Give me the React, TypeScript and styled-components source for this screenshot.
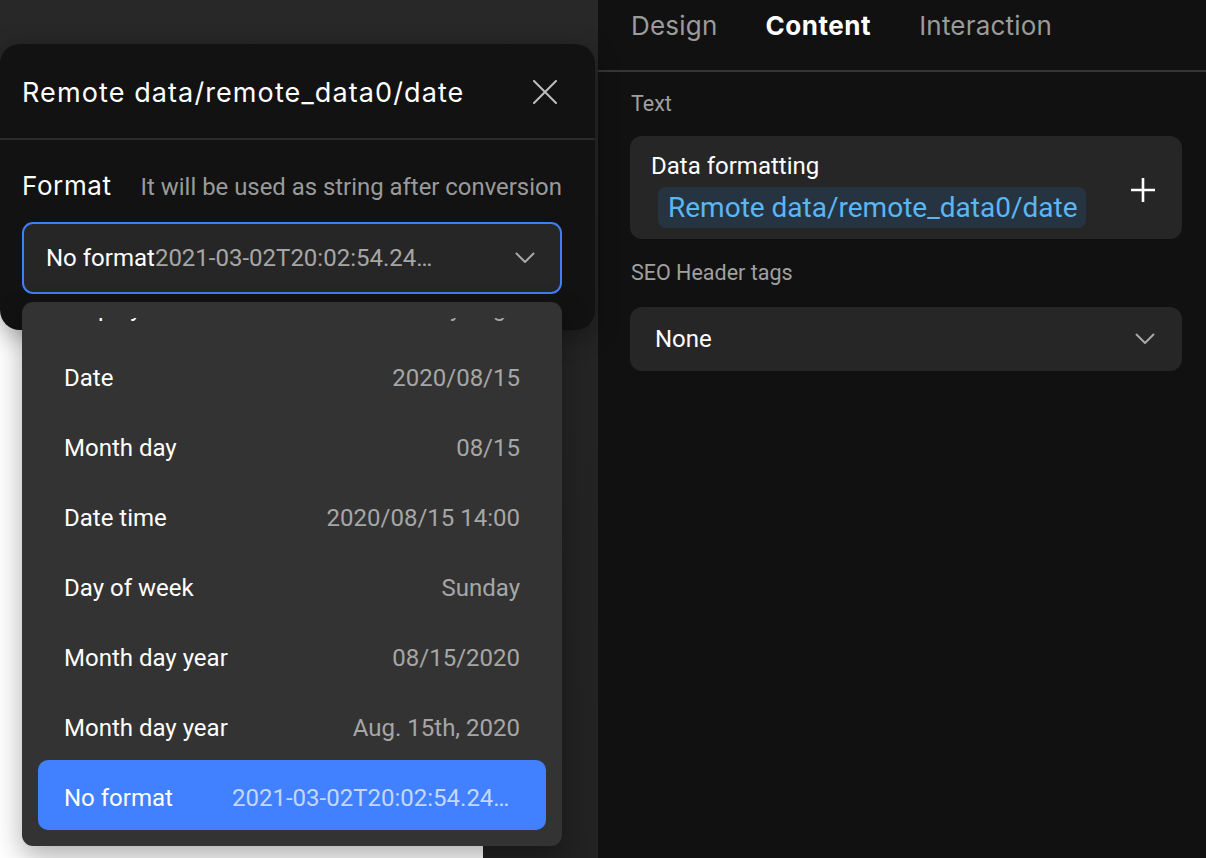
import * as React from "react";
import styled, { createGlobalStyle } from "styled-components";

interface FormatOption {
  label: string;
  sample: string;
}

const formats: FormatOption[] = [
  { label: "Display time", sample: "3 days ago" },
  { label: "Date", sample: "2020/08/15" },
  { label: "Month day", sample: "08/15" },
  { label: "Date time", sample: "2020/08/15 14:00" },
  { label: "Day of week", sample: "Sunday" },
  { label: "Month day year", sample: "08/15/2020" },
  { label: "Month day year", sample: "Aug. 15th, 2020" },
  { label: "No format", sample: "2021-03-02T20:02:54.240Z" },
];

const selected = formats.length - 1;

const GlobalStyle = createGlobalStyle`
  html, body {
    margin: 0;
    padding: 0;
    background: #111111;
  }
  body {
    font-family: Roboto, "Noto Sans", sans-serif;
    color: #ffffff;
    -webkit-font-smoothing: antialiased;
  }
  * {
    box-sizing: border-box;
  }
`;

const Screen = styled.div`
  display: grid;
  grid-template-columns: 598px 1fr;
  width: 100%;
  height: 100vh;
  overflow: hidden;
`;

/* ---------- left: canvas with the floating editor ---------- */

const Canvas = styled.div`
  position: relative;
  background: linear-gradient(180deg, #282828 0%, #242424 40%, #222222 100%);
`;

const Artboard = styled.div`
  position: absolute;
  left: 0;
  top: 300px;
  bottom: 0;
  width: 483px;
  background: #ffffff;
`;

const Modal = styled.div`
  position: absolute;
  top: 44px;
  left: 0;
  width: 595px;
  background: #121212;
  border-radius: 20px;
  box-shadow: 0 6px 24px rgba(0, 0, 0, 0.35);
  z-index: 2;
`;

const ModalHeader = styled.div`
  display: flex;
  align-items: center;
  justify-content: space-between;
  height: 96px;
  padding: 2px 38px 0 22px;
  border-bottom: 2px solid #2b2b2b;
`;

const ModalTitle = styled.h2`
  margin: 0;
  font-family: Inter, Roboto, sans-serif;
  font-size: 27px;
  font-weight: 400;
  letter-spacing: 1.1px;
  color: #ffffff;
`;

const IconButton = styled.button`
  display: flex;
  align-items: center;
  justify-content: center;
  padding: 0;
  border: 0;
  background: transparent;
  color: #bdbdbd;
  cursor: pointer;
`;

const ModalBody = styled.div`
  padding: 30px 33px 36px 22px;
`;

const FieldRow = styled.div`
  display: flex;
  align-items: baseline;
  gap: 29px;
  height: 32px;
  line-height: 32px;
  margin-bottom: 20px;
`;

const FieldLabel = styled.span`
  font-family: Inter, Roboto, sans-serif;
  font-size: 26px;
  letter-spacing: 0.6px;
  color: #ffffff;
`;

const FieldHint = styled.span`
  font-size: 23.9px;
  color: #9a9a9a;
  white-space: nowrap;
`;

const SelectWrap = styled.div`
  position: relative;
`;

const SelectBox = styled.div<{ $focused?: boolean }>`
  display: flex;
  align-items: center;
  justify-content: space-between;
  height: 72px;
  padding: 0 25px 0 22px;
  border: 2px solid ${(p) => (p.$focused ? "#3f7ef8" : "transparent")};
  border-radius: 11px;
  background: #262626;
  color: #a8a8a8;
`;

const SelectValue = styled.div`
  display: flex;
  align-items: center;
  min-width: 0;
  font-size: 24px;
  color: #ffffff;
  white-space: nowrap;
`;

const Truncated = styled.span<{ $max: number }>`
  max-width: ${(p) => p.$max}px;
  overflow: hidden;
  text-overflow: ellipsis;
  white-space: nowrap;
  color: #a6a6a6;
`;

const Menu = styled.div`
  position: absolute;
  top: calc(100% + 8px);
  left: 0;
  right: 0;
  padding: 16px 16px 16px;
  border-radius: 11px;
  background: #333333;
  box-shadow: 0 10px 28px rgba(0, 0, 0, 0.32);
`;

/* the list is scrolled to its end, so the first option is only partly shown */
const MenuViewport = styled.div`
  height: 512px;
  overflow: hidden;
`;

const MenuList = styled.ul`
  list-style: none;
  margin: -48px 0 0;
  padding: 0;
`;

const MenuItem = styled.li<{ $active?: boolean }>`
  display: flex;
  align-items: center;
  justify-content: space-between;
  gap: 24px;
  height: 70px;
  padding: 5px 26px 0;
  border-radius: 10px;
  background: ${(p) => (p.$active ? "#4181ff" : "transparent")};
  font-size: 24px;
  color: #ffffff;
  white-space: nowrap;

  ${Truncated} {
    color: ${(p) => (p.$active ? "rgba(255, 255, 255, 0.7)" : "#a6a6a6")};
  }
`;

/* ---------- right: properties panel ---------- */

const Panel = styled.aside`
  background: #111111;
  display: flex;
  flex-direction: column;
`;

const Tabs = styled.nav`
  display: flex;
  gap: 48px;
  height: 72px;
  padding: 7px 0 0 33px;
  border-bottom: 2px solid #363636;
`;

const Tab = styled.span<{ $active?: boolean }>`
  font-family: Inter, Roboto, sans-serif;
  font-size: 26px;
  line-height: 38px;
  font-weight: ${(p) => (p.$active ? 700 : 400)};
  letter-spacing: ${(p) => (p.$active ? "0.55px" : "0.2px")};
  color: ${(p) => (p.$active ? "#ffffff" : "#9b9b9b")};
`;

const PanelBody = styled.div`
  padding: 18px 24px 0 32px;
`;

const SectionLabel = styled.div`
  font-size: 21.5px;
  line-height: 28px;
  color: #a0a0a0;
  margin: 0 0 19px 1px;
`;

const Card = styled.div`
  display: flex;
  align-items: center;
  justify-content: space-between;
  padding: 15px 26px 11px 21px;
  border-radius: 12px;
  background: #262626;
  margin: -1px 0 20px;
`;

const CardText = styled.div`
  display: flex;
  flex-direction: column;
  align-items: flex-start;
`;

const CardTitle = styled.div`
  font-size: 24px;
  line-height: 30px;
  color: #ffffff;
`;

const Chip = styled.span`
  margin: 6px 0 0 7px;
  height: 41px;
  line-height: 41px;
  padding: 0 8px 0 10px;
  border-radius: 8px;
  background: #263442;
  color: #5bb6f3;
  font-size: 28px;
  white-space: nowrap;
`;

const PanelSelect = styled.div`
  display: flex;
  align-items: center;
  justify-content: space-between;
  height: 64px;
  margin-top: 20px;
  padding: 0 27px 0 25px;
  border-radius: 12px;
  background: #262626;
  font-size: 24px;
  color: #ffffff;
`;

const ChevronGlyph = styled.span`
  display: flex;
  color: #a8a8a8;
`;

const CloseIcon = () => (
  <svg width="24" height="24" viewBox="0 0 24 24" fill="none">
    <path d="M1 1 23 23M23 1 1 23" stroke="currentColor" strokeWidth="2" strokeLinecap="round" />
  </svg>
);

const Chevron = () => (
  <ChevronGlyph>
    <svg width="20" height="12" viewBox="0 0 20 12" fill="none">
      <path d="M1.5 1.5 10 10l8.5-8.5" stroke="currentColor" strokeWidth="2" strokeLinecap="round" strokeLinejoin="round" />
    </svg>
  </ChevronGlyph>
);

const PlusIcon = () => (
  <svg width="26" height="26" viewBox="0 0 26 26" fill="none">
    <path d="M13 1v24M1 13h24" stroke="#ffffff" strokeWidth="2.6" />
  </svg>
);

const App: React.FC = () => (
  <>
    <GlobalStyle />
    <Screen>
      <Canvas>
        <Artboard />
        <Modal>
          <ModalHeader>
            <ModalTitle>Remote data/remote_data0/date</ModalTitle>
            <IconButton aria-label="Close">
              <CloseIcon />
            </IconButton>
          </ModalHeader>
          <ModalBody>
            <FieldRow>
              <FieldLabel>Format</FieldLabel>
              <FieldHint>It will be used as string after conversion</FieldHint>
            </FieldRow>
            <SelectWrap>
              <SelectBox $focused>
                <SelectValue>
                  <span>{formats[selected].label}</span>
                  <Truncated $max={280}>{formats[selected].sample}</Truncated>
                </SelectValue>
                <Chevron />
              </SelectBox>
              <Menu>
                <MenuViewport>
                  <MenuList>
                    {formats.map((f, i) => (
                      <MenuItem key={i} $active={i === selected}>
                        <span>{f.label}</span>
                        <Truncated $max={288}>{f.sample}</Truncated>
                      </MenuItem>
                    ))}
                  </MenuList>
                </MenuViewport>
              </Menu>
            </SelectWrap>
          </ModalBody>
        </Modal>
      </Canvas>

      <Panel>
        <Tabs>
          <Tab>Design</Tab>
          <Tab $active>Content</Tab>
          <Tab>Interaction</Tab>
        </Tabs>
        <PanelBody>
          <SectionLabel>Text</SectionLabel>
          <Card>
            <CardText>
              <CardTitle>Data formatting</CardTitle>
              <Chip>Remote data/remote_data0/date</Chip>
            </CardText>
            <PlusIcon />
          </Card>
          <SectionLabel>SEO Header tags</SectionLabel>
          <PanelSelect>
            <span>None</span>
            <Chevron />
          </PanelSelect>
        </PanelBody>
      </Panel>
    </Screen>
  </>
);

export default App;
